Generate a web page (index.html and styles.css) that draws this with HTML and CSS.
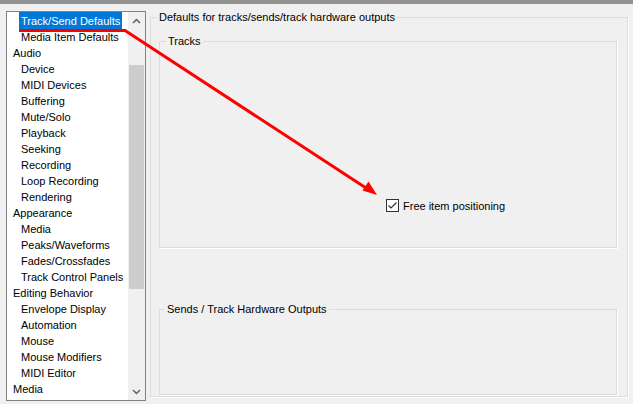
FILE: index.html
```html
<!DOCTYPE html>
<html lang="en">
<head>
  <meta charset="UTF-8">
  <title>Preferences - Track/Send Defaults</title>
  <link rel="stylesheet" href="styles.css">
</head>
<body>

  <div class="titlebar"></div>

  <div class="window">
    <div class="tree">
      <ul class="tree-list">
        <li class="child selected"><span>Track/Send Defaults</span></li>
        <li class="child">Media Item Defaults</li>
        <li>Audio</li>
        <li class="child">Device</li>
        <li class="child">MIDI Devices</li>
        <li class="child">Buffering</li>
        <li class="child">Mute/Solo</li>
        <li class="child">Playback</li>
        <li class="child">Seeking</li>
        <li class="child">Recording</li>
        <li class="child">Loop Recording</li>
        <li class="child">Rendering</li>
        <li>Appearance</li>
        <li class="child">Media</li>
        <li class="child">Peaks/Waveforms</li>
        <li class="child">Fades/Crossfades</li>
        <li class="child">Track Control Panels</li>
        <li>Editing Behavior</li>
        <li class="child">Envelope Display</li>
        <li class="child">Automation</li>
        <li class="child">Mouse</li>
        <li class="child">Mouse Modifiers</li>
        <li class="child">MIDI Editor</li>
        <li>Media</li>
      </ul>
      <div class="scrollbar">
        <div class="scroll-btn">
          <svg width="9" height="6" viewBox="0 0 9 6"><path d="M1 5 L4.5 1.5 L8 5" fill="none" stroke="#606060" stroke-width="1.5"/></svg>
        </div>
        <div class="scroll-track"><div class="scroll-thumb"></div></div>
        <div class="scroll-btn">
          <svg width="9" height="6" viewBox="0 0 9 6"><path d="M1 1 L4.5 4.5 L8 1" fill="none" stroke="#606060" stroke-width="1.5"/></svg>
        </div>
      </div>
    </div>

    <fieldset class="group outer">
      <legend>Defaults for tracks/sends/track hardware outputs</legend>

      <fieldset class="group tracks">
        <legend>Tracks</legend>
        <label class="check">
          <span class="check-box">
            <svg width="11" height="11" viewBox="0 0 11 11"><path d="M1.5 5.5 L4 8 L9.5 2.5" fill="none" stroke="#333" stroke-width="1.2"/></svg>
          </span>
          Free item positioning
        </label>
      </fieldset>

      <fieldset class="group sends">
        <legend>Sends / Track Hardware Outputs</legend>
      </fieldset>
    </fieldset>
  </div>

  <!-- red annotation arrow drawn over the dialog -->
  <svg class="annotation" width="633" height="404" viewBox="0 0 633 404">
    <path d="M19 30.5 L125 30.5 L366 188" fill="none" stroke="#f00" stroke-width="3"/>
    <polygon points="377,195 362.5,190.5 368.5,181.5" fill="#f00"/>
  </svg>

</body>
</html>
```

FILE: styles.css
```css
body {
  margin: 0;
  height: 404px;
  overflow: hidden;
  position: relative;
  background-color: #f0f0f0;
  font-family: "Liberation Sans", Arial, sans-serif;
  font-size: 11px;
  color: #000;
}

.titlebar {
  height: 4px;
  background-color: #929292;
}

.window {
  display: flex;
  align-items: flex-start;
  padding: 7px 0 0 6px;
}

/* tree view */
.tree {
  display: flex;
  width: 140px;
  height: 390px;
  box-sizing: border-box;
  border: 1px solid #828282;
  background-color: #fff;
}

.tree-list {
  flex: 1;
  list-style: none;
  margin: 0;
  padding: 0;
  overflow: hidden;
}

.tree-list li {
  height: 16px;
  line-height: 18px;
  padding-left: 6px;
  white-space: nowrap;
}

.tree-list li.child {
  padding-left: 14px;
}

.tree-list li.selected {
  padding-left: 12px;
}

.tree-list li.selected span {
  display: inline-block;
  vertical-align: top;
  height: 17px;
  line-height: 18px;
  padding: 0 2px;
  background-color: #0078d7;
  color: #fff;
}

.scrollbar {
  width: 17px;
  display: flex;
  flex-direction: column;
  background-color: #f0f0f0;
}

.scroll-btn {
  height: 17px;
  display: flex;
  align-items: center;
  justify-content: center;
}

.scroll-track {
  flex: 1;
  padding-top: 36px;
}

.scroll-thumb {
  height: 224px;
  margin: 0 1px;
  background-color: #cdcdcd;
}

/* group boxes */
.group {
  margin: 0;
  padding: 0;
  min-width: 0;
  box-sizing: border-box;
  border: 1px solid #dcdcdc;
  box-shadow: 1px 1px 0 #fff;
}

.group legend {
  margin-left: 6px;
  padding: 0 2px;
  line-height: 13px;
}

.outer {
  width: 478px;
  height: 386px;
  margin-left: 4px;
}

.tracks {
  width: 458px;
  height: 213px;
  margin: 11px 0 0 8px;
}

.sends {
  width: 458px;
  height: 92px;
  margin: 55px 0 0 8px;
}

.sends legend {
  margin-left: 5px;
}

.check {
  display: flex;
  align-items: center;
  gap: 4px;
  margin: 151px 0 0 226px;
}

.check-box {
  width: 13px;
  height: 13px;
  box-sizing: border-box;
  border: 1px solid #333;
  background-color: #fff;
  display: flex;
}

.annotation {
  position: absolute;
  top: 0;
  left: 0;
  pointer-events: none;
}
```
